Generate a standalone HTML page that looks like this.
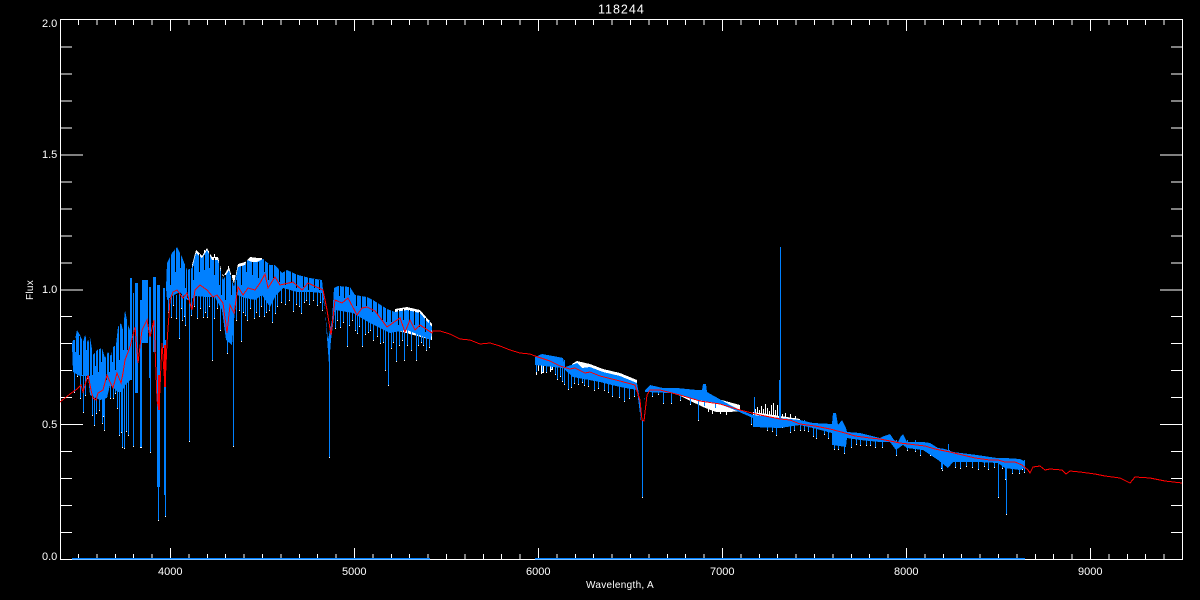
<!DOCTYPE html>
<html>
<head>
<meta charset="utf-8">
<title>118244</title>
<style>
html,body{margin:0;padding:0;background:#000;width:1200px;height:600px;overflow:hidden}
svg{display:block}
text{font-family:"Liberation Sans",sans-serif;fill:#fff}
</style>
</head>
<body>
<svg xmlns="http://www.w3.org/2000/svg" width="1200" height="600" viewBox="0 0 1200 600" shape-rendering="crispEdges">
<rect width="1200" height="600" fill="#000"/>
<!-- axes -->
<g fill="none" stroke="#fff" stroke-width="1">
<rect x="60.5" y="19.5" width="1122" height="540"/>
<path d="M78.5 20v5m18.4-5v5m18.4-5v5m18.4-5v5m18.4-5v5m18.4-5v11m18.4-11v5m18.4-5v5m18.4-5v5m18.4-5v5m18.4-5v5m18.4-5v5m18.4-5v5m18.4-5v5m18.4-5v5m18.4-5v11m18.4-11v5m18.4-5v5m18.4-5v5m18.4-5v5m18.4-5v5m18.4-5v5m18.4-5v5m18.4-5v5m18.4-5v5m18.4-5v11m18.4-11v5m18.4-5v5m18.4-5v5m18.4-5v5m18.4-5v5m18.4-5v5m18.4-5v5m18.4-5v5m18.4-5v5m18.4-5v11m18.4-11v5m18.4-5v5m18.4-5v5m18.4-5v5m18.4-5v5m18.4-5v5m18.4-5v5m18.4-5v5m18.4-5v5m18.4-5v11m18.4-11v5m18.4-5v5m18.4-5v5m18.4-5v5m18.4-5v5m18.4-5v5m18.4-5v5m18.4-5v5m18.4-5v5m18.4-5v11m18.4-11v5m18.4-5v5m18.4-5v5m18.4-5v5m18.4-5"/>
<path d="M78.5 559v-5m18.4 5v-5m18.4 5v-5m18.4 5v-5m18.4 5v-5m18.4 5v-11m18.4 11v-5m18.4 5v-5m18.4 5v-5m18.4 5v-5m18.4 5v-5m18.4 5v-5m18.4 5v-5m18.4 5v-5m18.4 5v-5m18.4 5v-11m18.4 11v-5m18.4 5v-5m18.4 5v-5m18.4 5v-5m18.4 5v-5m18.4 5v-5m18.4 5v-5m18.4 5v-5m18.4 5v-5m18.4 5v-11m18.4 11v-5m18.4 5v-5m18.4 5v-5m18.4 5v-5m18.4 5v-5m18.4 5v-5m18.4 5v-5m18.4 5v-5m18.4 5v-5m18.4 5v-11m18.4 11v-5m18.4 5v-5m18.4 5v-5m18.4 5v-5m18.4 5v-5m18.4 5v-5m18.4 5v-5m18.4 5v-5m18.4 5v-5m18.4 5v-11m18.4 11v-5m18.4 5v-5m18.4 5v-5m18.4 5v-5m18.4 5v-5m18.4 5v-5m18.4 5v-5m18.4 5v-5m18.4 5v-5m18.4 5v-11m18.4 11v-5m18.4 5v-5m18.4 5v-5m18.4 5v-5m18.4 5"/>
<path d="M61 532.5h11m-11-26.97h11m-11-26.97h11m-11-26.97h11m-11-26.97h22m-22-26.97h11m-11-26.97h11m-11-26.97h11m-11-26.97h11m-11-26.97h22m-22-26.97h11m-11-26.97h11m-11-26.97h11m-11-26.97h11m-11-26.97h22m-22-26.97h11m-11-26.97h11m-11-26.97h11m-11-26.97h11"/>
<path d="M1182 532.5h-11m11-26.97h-11m11-26.97h-11m11-26.97h-11m11-26.97h-22m22-26.97h-11m11-26.97h-11m11-26.97h-11m11-26.97h-11m11-26.97h-22m22-26.97h-11m11-26.97h-11m11-26.97h-11m11-26.97h-11m11-26.97h-22m22-26.97h-11m11-26.97h-11m11-26.97h-11m11-26.97h-11"/>
</g>
<!-- labels -->
<text x="598" y="13.5" font-size="12.5" letter-spacing="1">118244</text>
<text x="42" y="27" font-size="11">2.0</text>
<text x="42" y="158" font-size="11">1.5</text>
<text x="42" y="293" font-size="11">1.0</text>
<text x="42" y="428" font-size="11">0.5</text>
<text x="42" y="560" font-size="11">0.0</text>
<text x="158" y="575" font-size="11">4000</text>
<text x="342" y="575" font-size="11">5000</text>
<text x="526" y="575" font-size="11">6000</text>
<text x="710" y="575" font-size="11">7000</text>
<text x="894" y="575" font-size="11">8000</text>
<text x="1078" y="575" font-size="11">9000</text>
<text x="586" y="588" font-size="10" letter-spacing="0.3">Wavelength, A</text>
<text transform="translate(33,300) rotate(-90)" font-size="10" letter-spacing="0.3">Flux</text>
<!-- white spectrum peeking out -->
<g fill="#fff" stroke="none">
<polygon points="192,265 196,250 202,256 207,248 212,257 218,257 223,277 229,267 234,284 238,264 245,262 250,257 258,258 262,258 262,275 192,275"/>
<polygon points="395,309 407,307 420,310 432,324 432,340 395,330"/>
<polygon points="572,364 577,361 590,364 603,369 620,373 637,380 637,390 572,375"/>
<polygon points="672,392 703,407 716,412 730,412 740,411 740,405 703,395 672,388"/>
<polygon points="753,412 800,419 800,425 753,420"/>
</g>
<g fill="none" stroke="#fff" stroke-width="1">
<use href="#sp" transform="translate(0,1)"/>
<path d="M204.500 250v10M214.500 254v8M228.500 266v6M754.500 397v14"/>
<path d="M536.500 365V375M538.500 365V371M541.500 365V374M543.500 365V373M546.500 365V369M550.500 365V372M552.500 365V370"/>
<path d="M755.500 409V416M757.500 407V416M759.500 410V416M761.500 406V416M763.500 409V416M765.500 404V416M767.500 408V416M769.500 411V416M771.500 405V416M773.500 403V416M775.500 410V416M777.500 405V416M779.500 412V416M782.500 414V418M785.500 413V418M790.500 414V419M795.500 416V420"/>
<path d="M1019.500 462V474M1022.500 462V470M708.500 398V412M712.500 400V414M720.500 402V414M726.500 404V415"/>
</g>
<!-- blue spectrum -->
<g fill="#0080ff" stroke="none">
<polygon points="72,345 73,340 75,340 77,330 80,335 83,342 85,335 88,342 90,337 93,355 97,350 102,348 105,358 108,352 111,356 113,347 116,345 118,327 121,323 123,330 125,310 128,325 130,330 130,380 125,385 122,392 118,392 110,385 107,398 100,400 90,395 88,376 80,376 73,372"/>
<rect x="130" y="278" width="2" height="102"/>
<rect x="135" y="283" width="3" height="110"/>
<rect x="140" y="300" width="2" height="120"/>
<rect x="142" y="280" width="6" height="63"/>
<rect x="149" y="287" width="2" height="91"/>
<rect x="153" y="277" width="3" height="75"/>
<rect x="157" y="285" width="3" height="202"/>
<rect x="163" y="288" width="2" height="60"/>
<rect x="164" y="340" width="2" height="155"/>
<polygon points="166,288 167,263 172,253 177,247 182,257 187,270 192,268 196,253 202,258 207,250 212,260 218,260 223,280 229,270 234,287 238,267 245,265 247,260 252,262 257,262 263,259 270,265 275,265 282,273 287,270 298,275 310,278 322,280 324,300 328,340 332,320 334,288 338,286 350,287 355,295 367,297 373,300 387,309 395,312 407,310 420,313 432,327 431,340 407,330 390,333 370,323 353,313 335,310 331,340 329,365 325,310 322,293 310,292 297,292 283,288 276,295 270,307 262,295 255,300 245,298 237,295 234,320 232,345 226,340 222,310 215,297 205,297 196,296 190,300 187,300 180,292 172,296 167,300"/>
<polygon points="535,357 542,354 553,356 563,358 565,367 577,363 582,368 590,367 603,372 620,376 637,383 640,400 641,422 644,422 645,390 650,385 663,388 677,388 697,390 702,390 703,384 706,384 707,392 730,405 740,410 753,415 780,418 800,420 813,423 832,424 833,413 836,413 838,425 842,420 846,428 847,432 860,433 880,438 884,436 890,434 894,440 898,442 901,436 903,434 907,442 923,442 930,443 938,448 945,449 953,452 977,455 997,458 1005,458 1020,459 1024,461 1025,468 1020,470 1005,468 998,463 977,462 953,462 948,468 938,460 923,450 907,448 903,445 896,450 890,442 880,442 860,440 847,438 846,447 832,445 832,433 813,428 800,425 780,428 753,427 753,418 730,408 717,403 697,400 670,393 645,392 644,422 641,422 637,390 620,387 600,382 573,377 563,368 535,365"/>
<path d="M72 558h358v1.400h-358zM535 558h490v1.400h-490z"/>
</g>
<!-- black gaps in the dense band -->
<path fill="none" stroke="#000" stroke-width="1" d="M75.500 338V352M79.500 336V355M82.500 338V375M86.500 333V350M89.500 338V376M92.500 350V375M95.500 350V366M98.500 348V372M101.500 346V362M106.500 353V385M109.500 350V372M112.500 346V362M115.500 344V370M119.500 323V360M123.500 318V350M127.500 313V350M170.500 255V285M175.500 248V272M180.500 250V268M185.500 262V288M187.500 268V298M190.500 268V310M193.500 266V280M199.500 254V272M204.500 255V270M209.500 250V268M214.500 258V275M219.500 260V285M221.500 265V295M225.500 275V300M231.500 270V295M236.500 280V300M241.500 266V285M246.500 260V272M252.500 262V275M258.500 262V278M264.500 260V272M268.500 264V280M273.500 264V278M279.500 270V282M285.500 270V285M291.500 272V282M296.500 274V288M303.500 276V287M308.500 277V290M314.500 279V288M319.500 280V290M339.500 285V296M344.500 286V298M349.500 286V295M356.500 295V306M361.500 296V308M366.500 296V306M372.500 299V312M377.500 301V315M382.500 305V320M386.500 308V322M391.500 310V322M398.500 310V325M403.500 309V320M409.500 310V322M414.500 311V325M419.500 312V327M425.500 318V332"/>
<g fill="none" stroke="#0080ff" stroke-width="1">
<path id="sp" d="M74.500 370V392M77.500 370V376M80.500 370V398M83.500 370V412M85.500 370V395M87.500 370V378M92.500 380V415M94.500 380V425M96.500 380V413M99.500 380V410M102.500 380V423M103.500 380V416M104.500 380V430M106.500 380V392M110.500 380V398M113.500 380V398M115.500 380V393M117.500 380V408M119.500 380V435M121.500 380V432M122.500 380V447M124.500 380V448M126.500 380V431M128.500 380V435M133.500 293V446M140.500 380V447M141.500 380V447M150.500 360V452M158.500 450V520M165.500 450V516M171.500 290V317M179.500 290V338M182.500 290V320M185.500 290V325M189.500 270V441M203.500 290V317M207.500 290V317M212.500 290V360M220.500 290V330M227.500 300V353M233.500 287V446M241.500 290V341M245.500 290V315M254.500 290V318M259.500 290V316M269.500 290V310M272.500 290V322M275.500 290V313M293.500 290V311M301.500 290V313M306.500 290V300M322.500 290V310M329.500 340V457M335.500 300V328M340.500 300V327M347.500 300V346M357.500 300V333M362.500 300V346M370.500 320V330M380.500 320V343M385.500 320V370M388.500 320V385M393.500 320V342M396.500 320V361M404.500 320V360M416.500 320V360M423.500 320V345M429.500 320V347M536.500 360V372M542.500 360V372M557.500 360V379M562.500 360V381M564.500 360V384M568.500 370V389M571.500 370V387M574.500 370V383M582.500 370V382M584.500 370V385M594.500 375V390M612.500 380V396M619.500 380V397M624.500 380V401M629.500 380V398M642.500 420V497M663.500 390V403M671.500 390V403M698.500 395V420M751.500 415V424M753.500 415V426M767.500 420V430M772.500 420V431M776.500 420V435M782.500 420V427M800.500 420V430M804.500 420V430M813.500 425V436M816.500 425V438M824.500 425V434M834.500 430V449M838.500 430V449M844.500 430V453M851.500 435V447M860.500 435V445M866.500 435V445M875.500 440V447M896.500 440V455M907.500 440V450M915.500 440V451M941.500 450V468M942.500 450V470M947.500 450V460M949.500 450V460M966.500 455V466M978.500 460V469M988.500 460V469M998.500 460V497M1002.500 460V468M1005.500 460V479M1006.500 460V514M1019.500 460V473M1024.500 460V472M168.500 295V312M173.500 295V305M176.500 295V318M181.500 295V308M184.500 295V316M191.500 295V315M194.500 295V306M197.500 295V318M200.500 295V308M205.500 295V312M209.500 295V306M214.500 295V318M217.500 295V308M236.500 295V320M239.500 295V310M243.500 295V312M247.500 295V320M250.500 295V308M256.500 295V312M261.500 295V306M264.500 295V316M266.500 295V312M277.500 290V306M281.500 285V302M285.500 285V304M289.500 285V300M296.500 288V304M299.500 288V306M304.500 288V302M309.500 288V304M313.500 288V300M317.500 288V305M320.500 288V302M337.500 305V320M343.500 305V322M349.500 305V325M352.500 305V320M355.500 310V330M359.500 310V326M365.500 315V334M368.500 315V332M373.500 320V340M377.500 320V336M383.500 325V342M391.500 330V348M399.500 325V345M402.500 325V340M407.500 325V345M411.500 325V350M418.500 330V345M421.500 330V342M426.500 332V350M546.500 362V372M551.500 362V369M555.500 364V374M560.500 366V376M578.500 374V384M588.500 376V386M598.500 378V388M604.500 380V390M608.500 382V392M634.500 386V396M652.500 388V396M658.500 388V394M680.500 392V400M690.500 396V404M704.500 398V406M715.500 400V408M790.500 424V432M794.500 424V430M808.500 424V431M828.500 430V438M856.500 436V444M870.500 438V445M882.500 440V447M920.500 448V455M930.500 448V455M955.500 460V467M960.500 460V468M972.500 460V467M984.500 460V466M994.500 460V467M1012.500 466V473"/>
<path d="M754.500 397V415M948.500 444V452M780.500 247V380"/>
</g>
<rect x="779" y="380" width="2" height="40" fill="#0080ff"/>
<!-- red model -->
<polyline fill="none" stroke="#f00" stroke-width="1" points="60,402 65,398 70,394 77,389 81,385 83,392 88,375 91,390 93,398 96,400 98,393 103,390 107,375 110,382 113,388 117,373 121,383 123,373 125,360 130,347 135,327 138,363 142,330 147,320 150,337 154,320 157,400 159,410 162,343 165,387 167,343 170,300 173,292 177,290 183,298 187,293 192,310 195,290 200,285 207,290 213,297 217,295 223,303 227,333 230,305 234,313 238,287 240,290 243,295 248,288 255,290 260,283 265,274 268,288 275,277 280,285 293,282 302,290 308,283 323,290 327,310 331,335 335,300 342,303 348,298 357,315 362,308 367,307 375,311 387,327 400,318 405,332 410,320 415,330 420,325 432,333 433,331 440,331 450,334 460,339 470,340 480,344 490,343 500,346 510,350 520,353 530,354 535,356 550,361 560,366 570,369 575,368 585,373 590,372 600,376 620,381 635,385 640,400 642,420 644,421 647,395 650,390 660,390 680,395 700,401 720,404 740,410 760,415 780,419 790,420 800,424 815,426 830,429 845,433 855,436 870,438 880,439 890,441 900,443 925,446 935,449 950,452 975,458 990,460 998,460 1005,462 1015,462 1022,465 1028,470 1030,473 1033,467 1040,466 1045,470 1050,469 1062,470 1066,474 1070,471 1080,472 1095,474 1105,476 1120,478 1130,483 1135,477 1150,478 1165,481 1182,483"/>
<rect x="158" y="375" width="2" height="35" fill="#f00"/>
<rect x="164" y="345" width="2" height="42" fill="#f00"/>
</svg>
</body>
</html>
